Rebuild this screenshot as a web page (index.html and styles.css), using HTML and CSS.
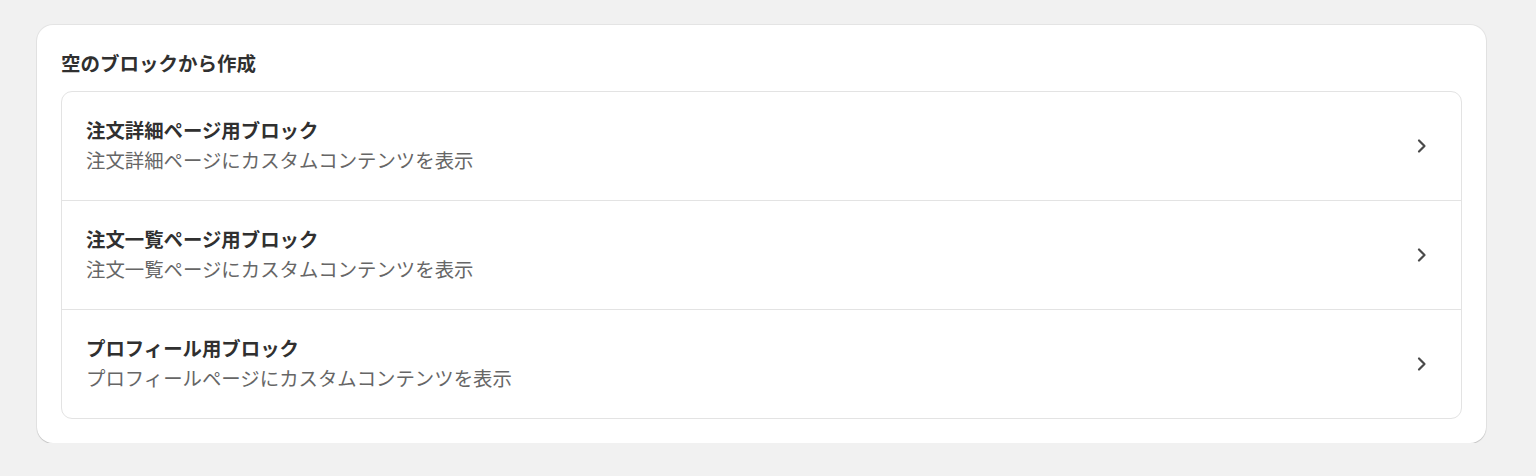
FILE: index.html
```html
<!DOCTYPE html>
<html lang="ja">
<head>
    <meta charset="UTF-8">
    <meta name="viewport" content="width=device-width, initial-scale=1.0">
    <title>空のブロックから作成</title>
    <link rel="stylesheet" href="styles.css">
</head>
<body>
    <div class="card">
        <h2 class="card-title">空のブロックから作成</h2>
        <div class="block-list">
            <div class="block-item">
                <div class="block-text">
                    <div class="block-name">注文詳細ページ用ブロック</div>
                    <div class="block-desc">注文詳細ページにカスタムコンテンツを表示</div>
                </div>
                <svg class="chevron" viewBox="0 0 20 20"><polyline points="8,4.5 13.5,10 8,15.5"/></svg>
            </div>
            <div class="block-item">
                <div class="block-text">
                    <div class="block-name">注文一覧ページ用ブロック</div>
                    <div class="block-desc">注文一覧ページにカスタムコンテンツを表示</div>
                </div>
                <svg class="chevron" viewBox="0 0 20 20"><polyline points="8,4.5 13.5,10 8,15.5"/></svg>
            </div>
            <div class="block-item">
                <div class="block-text">
                    <div class="block-name">プロフィール用ブロック</div>
                    <div class="block-desc">プロフィールページにカスタムコンテンツを表示</div>
                </div>
                <svg class="chevron" viewBox="0 0 20 20"><polyline points="8,4.5 13.5,10 8,15.5"/></svg>
            </div>
        </div>
    </div>
</body>
</html>
```

FILE: styles.css
```css
body {
    margin: 0;
    padding: 25px 50px 0 37px;
    background-color: #f1f1f1;
    font-family: "Noto Sans CJK JP", "Noto Sans", sans-serif;
    color: #303030;
}
.card {
    background-color: #fff;
    border-radius: 16px;
    padding: 23px 24px 24px 24px;
    box-shadow: 0 1px 1px rgba(0, 0, 0, 0.14), 0 0 0 1px rgba(0, 0, 0, 0.05);
}
.card-title {
    margin: 0 0 13px 0;
    font-size: 19.5px;
    line-height: 30px;
    font-weight: 700;
}
.block-list {
    border: 1px solid #e3e3e3;
    border-radius: 11px;
}
.block-item {
    display: flex;
    align-items: center;
    justify-content: space-between;
    padding: 23px 30px 25px 24px;
    border-bottom: 1px solid #e3e3e3;
}
.block-item:last-child {
    border-bottom: none;
}
.block-name {
    font-size: 19.4px;
    line-height: 30px;
    font-weight: 700;
}
.block-desc {
    font-size: 19.4px;
    line-height: 30px;
    color: #666;
}
.chevron {
    width: 20px;
    height: 20px;
    margin-top: 2px;
    fill: none;
    stroke: #4a4a4a;
    stroke-width: 2.2;
    stroke-linecap: round;
    stroke-linejoin: round;
}
```
